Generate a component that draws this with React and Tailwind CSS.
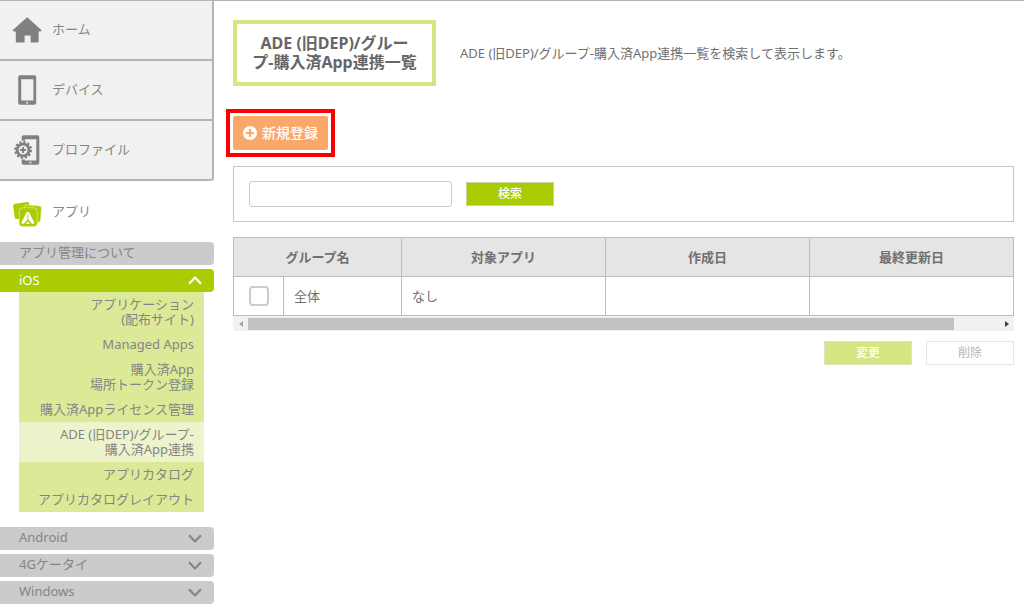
import { useState } from 'react';
import clsx from 'clsx';

const HomeIcon = () => (
  <svg viewBox="0 0 30 30" className="w-[30px] h-[30px]" fill="#808080" aria-hidden="true">
    <path d="M15.2 2.2 29.6 15.2 28.2 16.4H26.6V26.2Q26.6 27.4 25.6 27.4H18.6V20.4H12.6V27.4H5Q3.8 27.4 3.8 26.2V16.4H1.8L.6 15.2Z" />
  </svg>
);

const DeviceIcon = () => (
  <svg viewBox="0 0 30 30" className="w-[30px] h-[30px]" aria-hidden="true">
    <path
      fill="#808080"
      fillRule="evenodd"
      d="M8.2 .2H22.2Q24.2 .2 24.2 2V28Q24.2 29.8 22.2 29.8H8.2Q6.2 29.8 6.2 28V2Q6.2 .2 8.2 .2ZM9.2 4.2V25.4H21.4V4.2Z"
    />
    <circle cx="15.2" cy="27.7" r="1.1" fill="#ddd" />
  </svg>
);

const ProfileIcon = () => (
  <svg viewBox="0 0 30 30" className="w-[30px] h-[30px]" aria-hidden="true">
    <path
      fill="#808080"
      d="M11.5 .2H25.3Q27.3 .2 27.3 2V28Q27.3 29.8 25.3 29.8H11.7Q9.7 29.8 9.7 28V22L12.7 22.5V25.6H24.3V4.2H13V6.5L9.7 7V2Q9.7 .2 11.5 .2Z"
    />
    <circle cx="18.5" cy="27.7" r="1.1" fill="#ddd" />
    <circle cx="11.1" cy="15" r="9.6" fill="#f1f1f1" />
    <circle cx="11.1" cy="15" r="7.8" fill="none" stroke="#808080" strokeWidth="2.4" strokeDasharray="2.3 1.784" />
    <circle cx="11.1" cy="15" r="5.9" fill="none" stroke="#808080" strokeWidth="2.8" />
    <path d="M11.1 12V18M8.1 15H14.1" stroke="#808080" strokeWidth="2" />
  </svg>
);

const AppIcon = () => (
  <svg viewBox="0 0 30 30" className="w-[30px] h-[30px]" aria-hidden="true">
    <rect x="1.8" y="5.8" width="16.5" height="15.5" rx="2.5" fill="#a9cc02" transform="rotate(-8 10 13)" />
    <rect x="11.8" y="8.4" width="17.2" height="16.4" rx="2.5" fill="#a9cc02" stroke="#dcea98" strokeWidth=".8" transform="rotate(5 20 16)" />
    <rect x="7.2" y="10.8" width="18" height="18.6" rx="3" fill="#a9cc02" stroke="#dcea98" strokeWidth=".8" />
    <path d="M14.6 15.2H17L22.2 25.4Q22.6 26.8 21.2 26.8H19.4L15.8 22.6 12.2 26.8H10.4Q9 26.8 9.4 25.4Z" fill="#fff" />
    <path d="M15.8 17V22.6L11.8 27.2M15.8 22.6 19.8 27.2" fill="none" stroke="#a9cc02" strokeWidth=".9" />
    <path d="M13.6 27 15.8 24.6 18 27Z" fill="#fff" />
  </svg>
);

const Chevron = ({ up }) => (
  <svg viewBox="0 0 14 9" className="w-3.5 h-[9px] mr-3" fill="none" stroke="currentColor" strokeWidth="2.2" aria-hidden="true">
    <path d={up ? 'M1 7.8 7 1.6 13 7.8' : 'M1 1.2 7 7.4 13 1.2'} />
  </svg>
);

const PlusCircle = () => (
  <svg viewBox="0 0 14 14" className="w-3.5 h-3.5" aria-hidden="true">
    <circle cx="7" cy="7" r="7" fill="#fff" />
    <path d="M7 3V11M3 7H11" stroke="#f9a86a" strokeWidth="2.2" />
  </svg>
);

const mainItems = [
  { label: 'ホーム', Icon: HomeIcon },
  { label: 'デバイス', Icon: DeviceIcon },
  { label: 'プロファイル', Icon: ProfileIcon },
];

const iosItems = [
  { lines: ['アプリケーション', '(配布サイト)'] },
  { lines: ['Managed Apps'] },
  { lines: ['購入済App', '場所トークン登録'] },
  { lines: ['購入済Appライセンス管理'] },
  { lines: ['ADE (旧DEP)/グループ-', '購入済App連携'], active: true },
  { lines: ['アプリカタログ'] },
  { lines: ['アプリカタログレイアウト'] },
];

const platforms = ['Android', '4Gケータイ', 'Windows'];

const Sidebar = () => (
  <nav className="w-[214px] shrink-0 text-[#858585]">
    <div className="border-r-2 border-[#b4b4b4] bg-[#f1f1f1] rounded-br-[3px]">
      {mainItems.map(({ label, Icon }) => (
        <a
          key={label}
          href="#"
          className="flex items-center gap-2.5 h-[60px] pl-3 border-b-2 border-[#b4b4b4] last:rounded-br-[3px]"
        >
          <Icon />
          <span className="pb-0.5">{label}</span>
        </a>
      ))}
    </div>
    <a href="#" className="flex items-center gap-2.5 h-[61px] pl-3">
      <AppIcon />
      <span className="pb-0.5">アプリ</span>
    </a>

    <div className="flex flex-col gap-1">
      <a href="#" className="flex items-center h-[23px] pl-[19px] pb-1 bg-[#cbcbcb] rounded-r">
        アプリ管理について
      </a>
      <button className="flex items-center justify-between h-[23px] pl-[19px] bg-[#a9cc02] text-white rounded-r">
        <span className="pb-0.5">iOS</span>
        <Chevron up />
      </button>
    </div>

    <ul className="ml-[19px] mr-[10px] mb-[15px] bg-[#dcea98] text-right leading-[15px]">
      {iosItems.map(({ lines, active }) => (
        <li key={lines[0]}>
          <a href="#" className={clsx('block py-[5px] pr-2.5 whitespace-nowrap', active && 'bg-[#edf4cb]')}>
            {lines.map((line) => (
              <span key={line} className="block">{line}</span>
            ))}
          </a>
        </li>
      ))}
    </ul>

    <div className="flex flex-col gap-1">
      {platforms.map((name) => (
        <button key={name} className="flex items-center justify-between h-[23px] pl-[19px] bg-[#cbcbcb] rounded-r">
          <span className="pb-1">{name}</span>
          <Chevron />
        </button>
      ))}
    </div>
  </nav>
);

const GroupTable = () => {
  const [checked, setChecked] = useState(false);

  return (
    <table className="w-full table-fixed border-collapse text-[#707070] [&_th]:border [&_td]:border [&_th]:border-[#bdbdbd] [&_td]:border-[#bdbdbd]">
      <colgroup>
        <col className="w-[50px]" />
        <col className="w-[118px]" />
        <col />
        <col />
        <col />
      </colgroup>
      <thead>
        <tr className="h-[39px] bg-[#e5e5e5]">
          <th colSpan={2}>グループ名</th>
          <th>対象アプリ</th>
          <th>作成日</th>
          <th>最終更新日</th>
        </tr>
      </thead>
      <tbody>
        <tr className="h-[39px]">
          <td className="text-center">
            <input
              type="checkbox"
              aria-label="全体"
              checked={checked}
              onChange={(e) => setChecked(e.target.checked)}
              className="block mx-auto w-5 h-5 appearance-none border-2 border-[#cbcbcb] rounded checked:bg-[#a9cc02]"
            />
          </td>
          <td className="px-2.5">全体</td>
          <td className="px-2.5">なし</td>
          <td></td>
          <td></td>
        </tr>
      </tbody>
    </table>
  );
};

const ScrollBar = () => (
  <div className="flex items-center h-[15px] bg-[#f1f1f1]">
    <span className="flex justify-center w-[15px]">
      <svg viewBox="0 0 4 6" className="w-1 h-1.5" fill="#a3a3a3" aria-hidden="true"><path d="M4 0V6L0 3Z" /></svg>
    </span>
    <div className="flex-1">
      <div className="w-[94%] h-3 bg-[#c1c1c1]"></div>
    </div>
    <span className="flex justify-center w-[15px]">
      <svg viewBox="0 0 4 6" className="w-1 h-1.5" fill="#404040" aria-hidden="true"><path d="M0 0V6L4 3Z" /></svg>
    </span>
  </div>
);

const App = () => {
  const [query, setQuery] = useState('');

  return (
    <div className="flex min-h-screen border-t border-[#b4b4b4] bg-white text-[13px] leading-5 font-['Noto_Sans','Noto_Sans_CJK_JP',sans-serif]">
      <Sidebar />

      <main className="flex-1 min-w-0 pl-[19px] pr-2.5 pt-[19px]">
        <header className="flex items-center gap-6">
          <h1 className="w-[203px] shrink-0 py-[10px] border-4 border-[#d6e582] text-center text-base leading-[19px] font-bold text-[#666]">
            ADE (旧DEP)/グルー
            <br />
            プ-購入済App連携一覧
          </h1>
          <p className="text-[#707070]">ADE (旧DEP)/グループ-購入済App連携一覧を検索して表示します。</p>
        </header>

        {/* Highlighted registration button */}
        <div className="w-fit mt-[23px] -ml-[7px] p-[3px] border-4 border-[#fb0000]">
          <button className="flex items-center gap-[5px] h-[34px] px-[10px] bg-[#f9a86a] text-sm text-white rounded-xs font-medium">
            <PlusCircle />
            新規登録
          </button>
        </div>

        <form
          className="flex items-center gap-[14px] h-[56px] mt-[9px] px-[15px] border border-[#c6c6c6]"
          onSubmit={(e) => e.preventDefault()}
        >
          <input
            type="text"
            aria-label="検索"
            value={query}
            onChange={(e) => setQuery(e.target.value)}
            className="w-[203px] h-[26px] px-2 border border-[#ccc] rounded-[3px]"
          />
          <button className="w-[88px] h-6 border border-[#c9d3a0] bg-[#a9cc02] text-xs font-medium text-white">
            検索
          </button>
        </form>

        <div className="mt-[15px]">
          <GroupTable />
          <ScrollBar />
        </div>

        <div className="flex justify-end gap-[14px] mt-2.5">
          <button className="w-[88px] h-6 border border-[#dfe5c0] bg-[#d6e582] text-xs font-medium text-white">変更</button>
          <button className="w-[88px] h-6 border border-[#e5e5e5] bg-white text-xs text-[#b5b5b5]">削除</button>
        </div>
      </main>
    </div>
  );
};

export default App;
